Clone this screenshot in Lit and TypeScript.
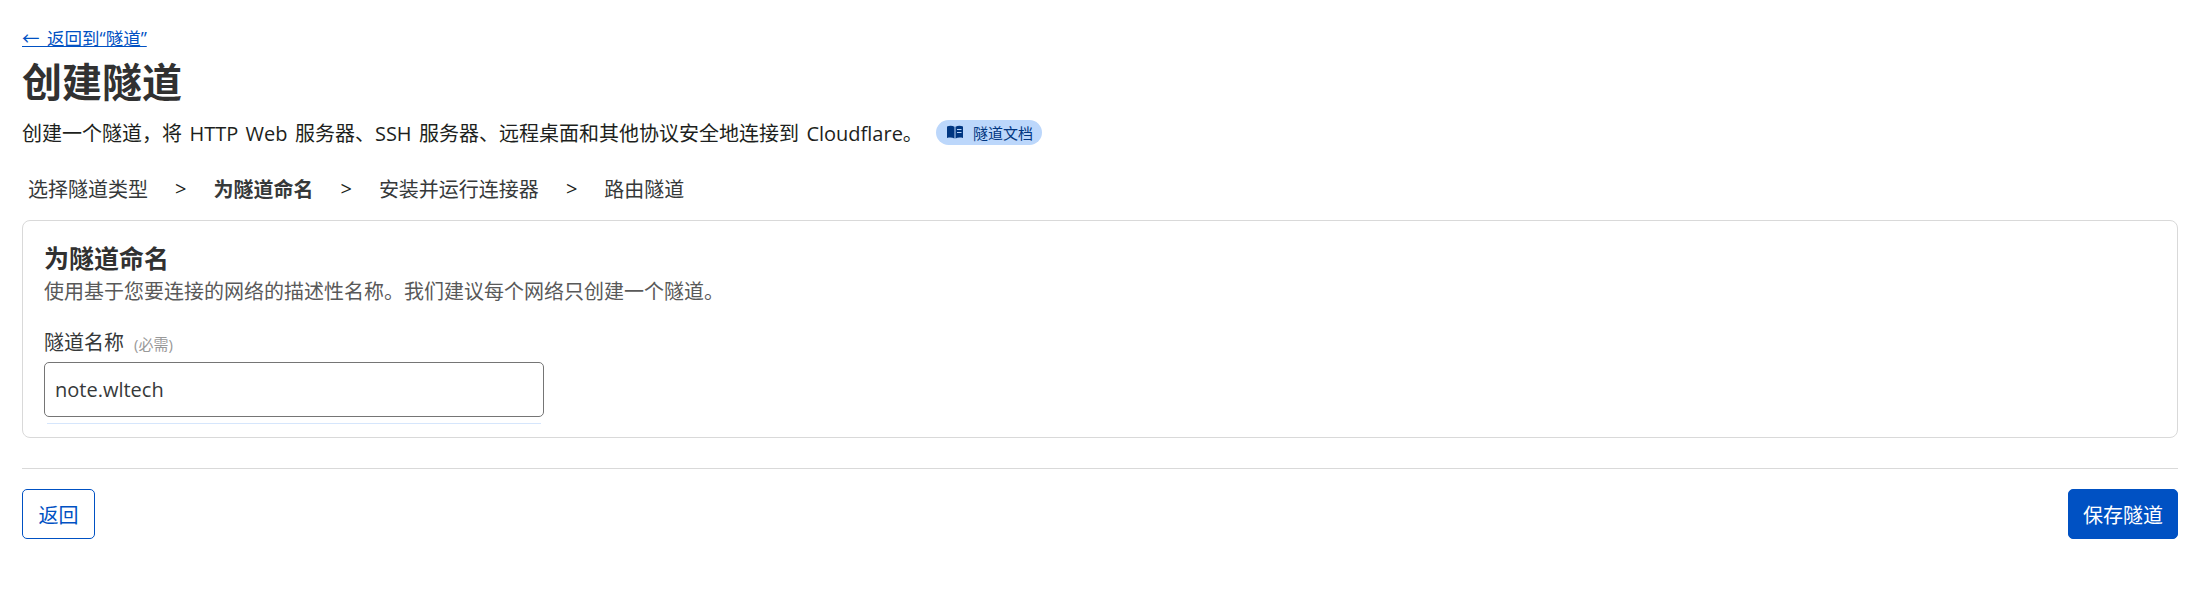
import { LitElement, css, html } from "lit";
import { customElement } from "lit/decorators.js";

const steps = ["选择隧道类型", "为隧道命名", "安装并运行连接器", "路由隧道"];

@customElement("app-root")
export class AppRoot extends LitElement {
  static styles = css`
    :host {
      display: block;
      font-family: "Open Sans", "Noto Sans CJK SC", sans-serif;
      font-size: 20px;
      color: #36393a;
      background: #fff;
      min-height: 595px;
    }

    .page {
      display: flex;
      flex-direction: column;
      padding: 26px 24px 0 22px;
    }

    .back-link {
      align-self: flex-start;
      font-size: 17.5px;
      line-height: 24px;
      color: #0051c3;
      text-decoration: underline;
      word-spacing: 3px;
    }

    h1 {
      margin: 7px 0 0;
      font-size: 40px;
      line-height: 50px;
      font-weight: 700;
      color: #313131;
    }

    .intro {
      display: flex;
      align-items: center;
      margin-top: 11px;
      height: 28px;
      color: #1d1f20;
      word-spacing: 2.200px;
    }

    .badge {
      display: flex;
      align-items: center;
      gap: 10px;
      height: 25px;
      margin-left: 13px;
      padding: 0 9px 0 11px;
      border-radius: 13px;
      background: #bcd7fb;
      color: #003681;
      font-size: 15px;
    }

    .badge svg {
      width: 16px;
      height: 14px;
    }

    .steps {
      display: flex;
      align-items: center;
      gap: 27px;
      margin: 28px 0 0 6px;
      height: 28px;
    }

    .step.current {
      font-weight: 700;
    }

    .sep {
      color: #1d1f20;
    }

    .card {
      margin-top: 18px;
      height: 218px;
      box-sizing: border-box;
      padding: 22px 21px 0;
      border: 1px solid #d9d9d9;
      border-radius: 8px;
    }

    h2 {
      margin: 0;
      font-size: 25px;
      line-height: 30px;
      font-weight: 700;
      color: #313131;
    }

    .help {
      margin-top: 6px;
      line-height: 26px;
      color: #595959;
    }

    .label {
      display: flex;
      align-items: baseline;
      gap: 10px;
      margin-top: 25px;
      line-height: 26px;
    }

    .label small {
      font-size: 15px;
      color: #999;
    }

    .input-wrap {
      width: 500px;
      margin-top: 5px;
    }

    .input {
      height: 55px;
      box-sizing: border-box;
      padding: 0 10px;
      display: flex;
      align-items: center;
      border: 1px solid #757575;
      border-radius: 5px;
      color: #36393a;
    }

    .underline {
      height: 1px;
      margin: 6px 3px 0;
      background: #d6e6fc;
    }

    hr {
      margin: 30px 0 0;
      border: 0;
      border-top: 1px solid #d9d9d9;
    }

    .actions {
      display: flex;
      justify-content: space-between;
      margin-top: 20px;
    }

    button {
      height: 50px;
      padding: 0 15.500px;
      border: 1px solid #0051c3;
      border-radius: 5px;
      background: #fff;
      color: #0051c3;
      font: inherit;
    }

    button.primary {
      padding: 0 14px;
      background: #0051c3;
      color: #fff;
    }
  `;

  render() {
    return html`
      <div class="page">
        <a class="back-link">← 返回到“隧道”</a>
        <h1>创建隧道</h1>
        <div class="intro">
          创建一个隧道，将 HTTP Web 服务器、SSH 服务器、远程桌面和其他协议安全地连接到 Cloudflare。
          <span class="badge">
            <svg viewBox="0 0 16 14" fill="currentColor">
              <path d="M0 1.500C2.500.6 5.500.6 7.500 1.800V13.500C5.500 12.400 2.500 12.400 0 13V1.500Z" />
              <path d="M8.500 1.800C10.500.6 13.500.6 16 1.500V13C13.500 12.400 10.500 12.400 8.500 13.500V1.800ZM10 4v1h4.500V4H10Zm0 3v1h4.500V7H10Z" fill-rule="evenodd" />
            </svg>
            隧道文档
          </span>
        </div>
        <nav class="steps">
          ${steps.map(
            (step, i) => html`
              ${i > 0 ? html`<span class="sep">&gt;</span>` : ""}
              <span class="step ${i === 1 ? "current" : ""}">${step}</span>
            `,
          )}
        </nav>
        <section class="card">
          <h2>为隧道命名</h2>
          <div class="help">使用基于您要连接的网络的描述性名称。我们建议每个网络只创建一个隧道。</div>
          <div class="label">隧道名称 <small>(必需)</small></div>
          <div class="input-wrap">
            <div class="input">note.wltech</div>
            <div class="underline"></div>
          </div>
        </section>
        <hr />
        <div class="actions">
          <button>返回</button>
          <button class="primary">保存隧道</button>
        </div>
      </div>
    `;
  }
}
